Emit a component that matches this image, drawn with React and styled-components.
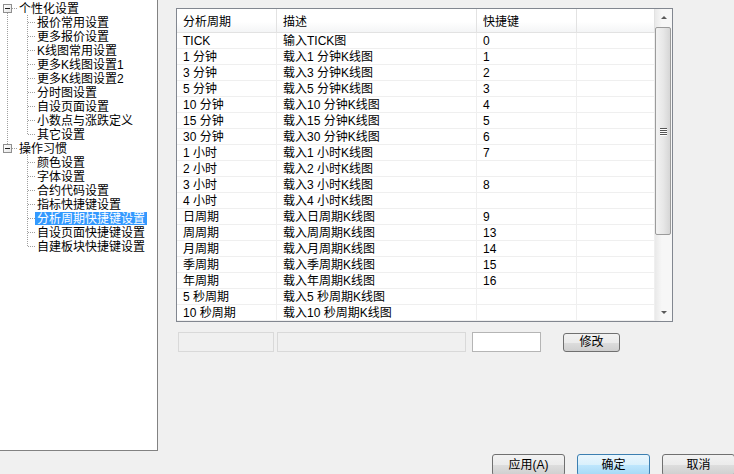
import React from "react";
import styled, { createGlobalStyle } from "styled-components";

const GlobalStyle = createGlobalStyle`
  html, body {
    margin: 0;
    padding: 0;
    background: #f0f0f0;
  }
  body {
    font-family: "Liberation Sans", "Noto Sans CJK SC", sans-serif;
    font-size: 12px;
    color: #000;
  }
`;

const Page = styled.div`
  width: 734px;
  height: 474px;
  display: flex;
  overflow: hidden;
  background: #f0f0f0;
`;

/* ---------- tree ---------- */

const TreePanel = styled.div`
  width: 158px;
  height: 451px;
  flex: none;
  box-sizing: border-box;
  padding-top: 1px;
  background: #fff;
  border-right: 1px solid #828282;
  border-bottom: 1px solid #828282;
`;

const dotV = "repeating-linear-gradient(to bottom, #a0a0a0 0 1px, transparent 1px 2px)";
const dotH = "repeating-linear-gradient(to right, #a0a0a0 0 1px, transparent 1px 2px)";

const TreeRow = styled.div`
  display: flex;
  height: 14px;
  align-items: stretch;
  white-space: nowrap;
`;

/* root column: holds the expand box or the root guide line */
const RootCol = styled.span`
  width: 17px;
  flex: none;
  display: flex;
  align-items: center;
  background-image: ${(p) => (p.$line ? dotV : "none")}, ${(p) => (p.$box ? dotH : "none")};
  background-repeat: no-repeat;
  background-size: 1px ${(p) => (p.$line === "top" || p.$line === "bottom" ? "3px" : "100%")}, 5px 1px;
  background-position: 7px ${(p) => (p.$line === "bottom" ? "12px" : "0")}, 12px 7px;
`;

const ExpandBox = styled.span`
  width: 9px;
  height: 9px;
  margin-left: 3px;
  box-sizing: border-box;
  border: 1px solid #8f8f8f;
  background: linear-gradient(135deg, #fff, #e6e6e6);
  display: flex;
  align-items: center;
  justify-content: center;
  &::before {
    content: "";
    width: 5px;
    height: 1px;
    background: #1e1e1e;
  }
`;

const ChildCol = styled.span`
  width: 18px;
  flex: none;
  background-image: ${dotV}, ${dotH};
  background-repeat: no-repeat;
  background-size: 1px ${(p) => (p.$last ? "8px" : "100%")}, 7px 1px;
  background-position: 10px 0, 11px 7px;
`;

const Label = styled.span`
  padding: 1px 2px 0;
  color: ${(p) => (p.$selected ? "#fff" : "#000")};
  background: ${(p) => (p.$selected ? "#3399ff" : "transparent")};
  height: 13px;
  box-sizing: border-box;
  line-height: 12px;
  align-self: center;
`;

/* ---------- main ---------- */

const Main = styled.div`
  flex: 1;
  display: flex;
  flex-direction: column;
  padding: 8px 0 0 18px;
`;

const Grid = styled.div`
  width: 497px;
  height: 316px;
  box-sizing: border-box;
  border: 1px solid #828790;
  background: #fff;
  display: flex;
`;

const GridBody = styled.div`
  flex: 1;
  display: flex;
  flex-direction: column;
`;

const HeadRow = styled.div`
  display: grid;
  grid-template-columns: 100px 200px 100px 78px;
  height: 24px;
  box-sizing: border-box;
  border-bottom: 1px solid #e2e2e2;
  background: linear-gradient(#ffffff 0%, #ffffff 55%, #f4f5f6 100%);
`;

const HeadCell = styled.div`
  padding: 3px 0 0 6px;
  line-height: 20px;
  border-right: 1px solid #e2e2e2;
`;

const Row = styled.div`
  display: grid;
  grid-template-columns: 100px 200px 100px 78px;
  height: 16px;
  box-sizing: border-box;
  border-bottom: 1px solid #efefef;
`;

const Cell = styled.div`
  padding: 2px 0 0 6px;
  line-height: 13px;
  border-right: 1px solid #efefef;
  white-space: nowrap;
  overflow: hidden;
`;

const ScrollBar = styled.div`
  width: 17px;
  flex: none;
  display: flex;
  flex-direction: column;
  background: linear-gradient(to right, #e9e9e9, #f7f7f7 40%, #f7f7f7);
`;

const ArrowBtn = styled.div`
  height: 17px;
  display: flex;
  align-items: center;
  justify-content: center;
  &::before {
    content: "";
    border-left: 3px solid transparent;
    border-right: 3px solid transparent;
    ${(p) => (p.$down ? "border-top: 3px solid #5a5a5a;" : "border-bottom: 3px solid #5a5a5a;")}
  }
`;

const Spacer = styled.div`
  flex: 1;
`;

const Thumb = styled.div`
  height: 208px;
  margin: 1px 1px 0 0;
  box-sizing: border-box;
  border: 1px solid #9b9b9b;
  border-radius: 2px;
  background: linear-gradient(to right, #f2f2f2, #e8e8e8 50%, #d6d6d6 100%);
  display: flex;
  flex-direction: column;
  align-items: center;
  justify-content: center;
  gap: 1px;
`;

const Grip = styled.span`
  width: 7px;
  height: 1px;
  background: #555;
  box-shadow: 0 1px 0 #fff;
`;

const EditRow = styled.div`
  display: flex;
  align-items: center;
  margin-top: 10px;
  height: 21px;
  padding-left: 2px;
`;

const Field = styled.div`
  width: ${(p) => p.$w}px;
  height: 20px;
  box-sizing: border-box;
  margin-right: ${(p) => p.$gap}px;
  border: 1px solid ${(p) => (p.$disabled ? "#d9d9d9" : "#b5b5b5")};
  background: ${(p) => (p.$disabled ? "#f0f0f0" : "#fff")};
`;

const Button = styled.button`
  width: ${(p) => p.$w}px;
  height: ${(p) => p.$h}px;
  box-sizing: border-box;
  padding: 0;
  font-family: inherit;
  font-size: 12px;
  color: #000;
  border-radius: 3px;
  border: 1px solid ${(p) => (p.$default ? "#3c7fb1" : "#707070")};
  background: ${(p) =>
    p.$default
      ? "linear-gradient(#eaf6fd 0%, #d9f0fc 50%, #bee6fd 51%, #a7d9f5 100%)"
      : "linear-gradient(#f2f2f2 0%, #ebebeb 50%, #dddddd 51%, #cfcfcf 100%)"};
  line-height: 1;
  flex: none;
`;

const ButtonBar = styled.div`
  display: flex;
  gap: 12px;
  margin-top: 102px;
  padding-left: 316px;
`;

const tree = [
  {
    label: "个性化设置",
    children: [
      "报价常用设置",
      "更多报价设置",
      "K线图常用设置",
      "更多K线图设置1",
      "更多K线图设置2",
      "分时图设置",
      "自设页面设置",
      "小数点与涨跌定义",
      "其它设置",
    ],
  },
  {
    label: "操作习惯",
    children: [
      "颜色设置",
      "字体设置",
      "合约代码设置",
      "指标快捷键设置",
      "分析周期快捷键设置",
      "自设页面快捷键设置",
      "自建板块快捷键设置",
    ],
  },
];

const rows = [
  ["TICK", "输入TICK图", "0"],
  ["1 分钟", "载入1 分钟K线图", "1"],
  ["3 分钟", "载入3 分钟K线图", "2"],
  ["5 分钟", "载入5 分钟K线图", "3"],
  ["10 分钟", "载入10 分钟K线图", "4"],
  ["15 分钟", "载入15 分钟K线图", "5"],
  ["30 分钟", "载入30 分钟K线图", "6"],
  ["1 小时", "载入1 小时K线图", "7"],
  ["2 小时", "载入2 小时K线图", ""],
  ["3 小时", "载入3 小时K线图", "8"],
  ["4 小时", "载入4 小时K线图", ""],
  ["日周期", "载入日周期K线图", "9"],
  ["周周期", "载入周周期K线图", "13"],
  ["月周期", "载入月周期K线图", "14"],
  ["季周期", "载入季周期K线图", "15"],
  ["年周期", "载入年周期K线图", "16"],
  ["5 秒周期", "载入5 秒周期K线图", ""],
  ["10 秒周期", "载入10 秒周期K线图", ""],
];

const selected = "分析周期快捷键设置";

function Tree() {
  return (
    <TreePanel>
      {tree.map((group, gi) => {
        const hasNext = gi < tree.length - 1;
        return (
          <React.Fragment key={group.label}>
            <TreeRow>
              <RootCol $box $line={hasNext ? "bottom" : gi > 0 ? "top" : null}>
                <ExpandBox />
              </RootCol>
              <Label>{group.label}</Label>
            </TreeRow>
            {group.children.map((c, ci) => (
              <TreeRow key={c}>
                <RootCol $line={hasNext ? "full" : null} />
                <ChildCol $last={ci === group.children.length - 1} />
                <Label $selected={c === selected}>{c}</Label>
              </TreeRow>
            ))}
          </React.Fragment>
        );
      })}
    </TreePanel>
  );
}

export default function App() {
  return (
    <>
      <GlobalStyle />
      <Page>
        <Tree />
        <Main>
          <Grid>
            <GridBody>
              <HeadRow>
                <HeadCell>分析周期</HeadCell>
                <HeadCell>描述</HeadCell>
                <HeadCell>快捷键</HeadCell>
                <HeadCell />
              </HeadRow>
              {rows.map((r) => (
                <Row key={r[0]}>
                  <Cell>{r[0]}</Cell>
                  <Cell>{r[1]}</Cell>
                  <Cell>{r[2]}</Cell>
                  <Cell />
                </Row>
              ))}
            </GridBody>
            <ScrollBar>
              <ArrowBtn />
              <Thumb>
                <Grip />
                <Grip />
                <Grip />
                <Grip />
              </Thumb>
              <Spacer />
              <ArrowBtn $down />
            </ScrollBar>
          </Grid>
          <EditRow>
            <Field $w={96} $gap={3} $disabled />
            <Field $w={189} $gap={6} $disabled />
            <Field $w={69} $gap={22} />
            <Button $w={57} $h={19}>修改</Button>
          </EditRow>
          <ButtonBar>
            <Button $w={73} $h={22}>应用(A)</Button>
            <Button $w={73} $h={22} $default>确定</Button>
            <Button $w={73} $h={22}>取消</Button>
          </ButtonBar>
        </Main>
      </Page>
    </>
  );
}
